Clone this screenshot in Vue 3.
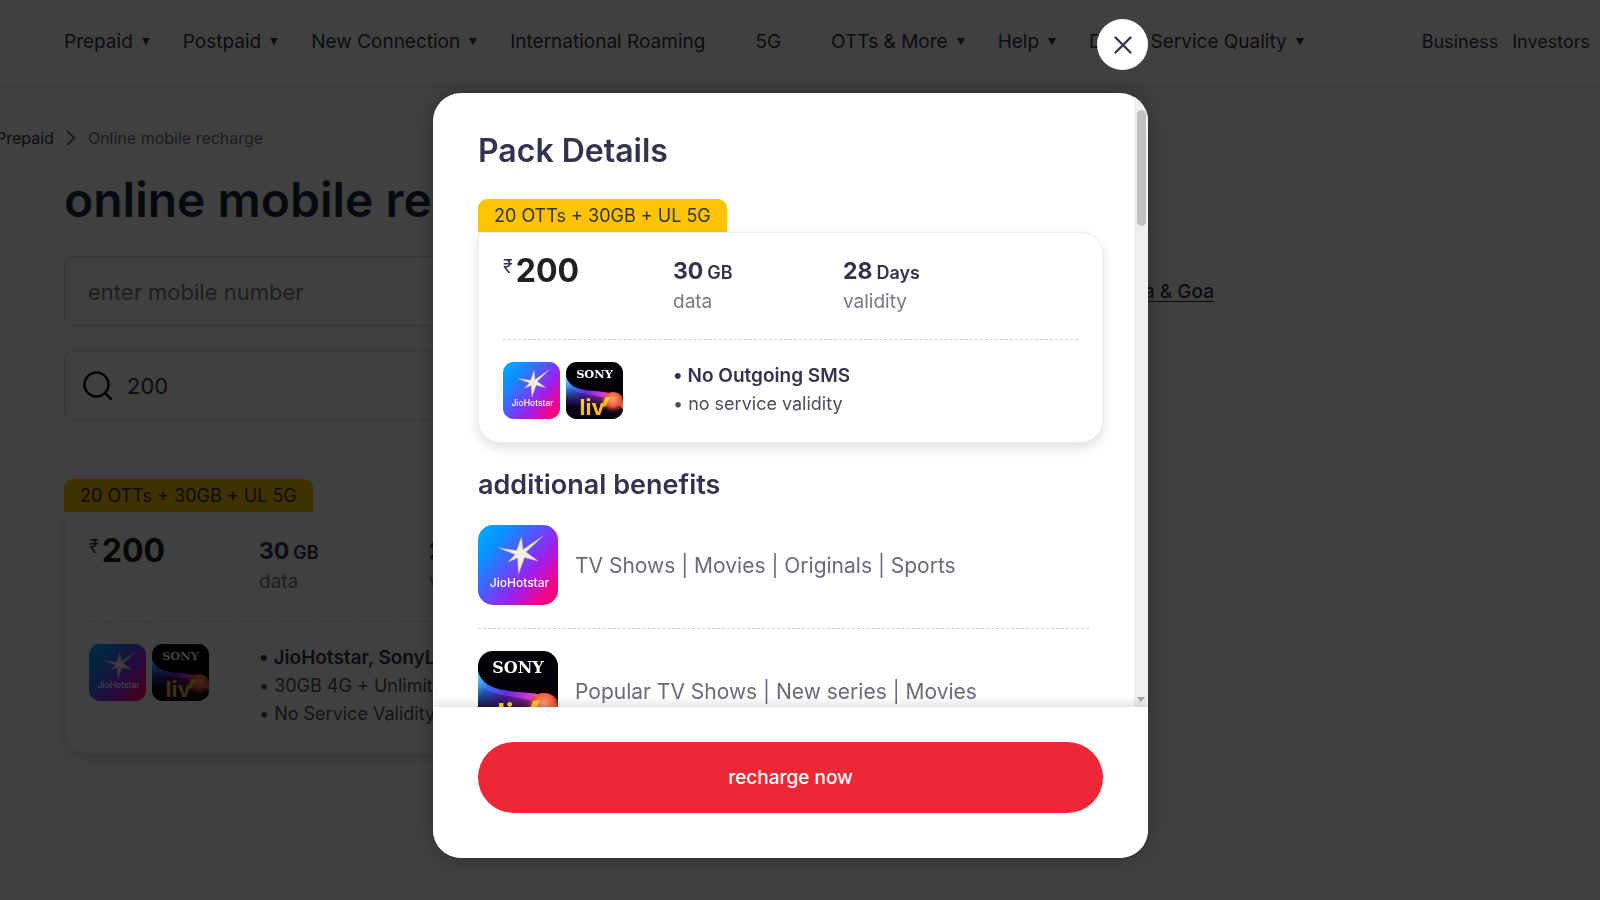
<script setup>
import { ref } from "vue";

const mobile = ref("");
const search = ref("200");
const isOpen = ref(true);

const navItems = [
    { label: "Prepaid", menu: true },
    { label: "Postpaid", menu: true },
    { label: "New Connection", menu: true },
    { label: "International Roaming", menu: false },
    { label: "5G", menu: false },
    { label: "OTTs & More", menu: true },
    { label: "Help", menu: true },
    { label: "Digital Service Quality", menu: true },
];

const pack = {
    tag: "20 OTTs + 30GB + UL 5G",
    price: "200",
    specs: [
        { value: "30", unit: "GB", label: "data" },
        { value: "28", unit: "Days", label: "validity" },
    ],
    apps: ["hotstar", "sonyliv"],
};

const listPoints = ["JioHotstar, SonyLIV + 18 OTTs", "30GB 4G + Unlimited 5G", "No Service Validity"];
const modalPoints = ["No Outgoing SMS", "no service validity"];

const benefits = [
    { app: "hotstar", text: "TV Shows | Movies | Originals | Sports" },
    { app: "sonyliv", text: "Popular TV Shows | New series | Movies" },
];
</script>

<template>
    <div class="page">
        <!-- app logos, reused by both cards and the benefits list -->
        <svg class="sprite" width="0" height="0" aria-hidden="true">
            <defs>
                <linearGradient id="hs-bg" x1="0" y1="0.1" x2="1" y2="0.9">
                    <stop offset="0" stop-color="#00a8ff" />
                    <stop offset="0.2" stop-color="#0c90ff" />
                    <stop offset="0.45" stop-color="#5b50ff" />
                    <stop offset="0.66" stop-color="#a31de8" />
                    <stop offset="0.84" stop-color="#e4089c" />
                    <stop offset="1" stop-color="#ff0064" />
                </linearGradient>
                <linearGradient id="sl-band" x1="0" y1="0.1" x2="1" y2="0.5">
                    <stop offset="0" stop-color="#4cc4ff" />
                    <stop offset="0.16" stop-color="#2f74f5" />
                    <stop offset="0.4" stop-color="#6a2be0" />
                    <stop offset="0.64" stop-color="#c936d8" />
                    <stop offset="0.84" stop-color="#ff7a70" />
                    <stop offset="1" stop-color="#ffa04a" />
                </linearGradient>
                <linearGradient id="sl-fade" x1="0.55" y1="0" x2="0.45" y2="1">
                    <stop offset="0.1" stop-color="#0a0214" stop-opacity="0" />
                    <stop offset="0.7" stop-color="#0a0214" />
                </linearGradient>
                <radialGradient id="sl-ball" cx="0.5" cy="0.3" r="0.6">
                    <stop offset="0" stop-color="#ffa070" />
                    <stop offset="0.5" stop-color="#f0583c" />
                    <stop offset="1" stop-color="#5a1020" stop-opacity="0" />
                </radialGradient>
                <linearGradient id="sl-gold" x1="0" y1="0" x2="0" y2="1">
                    <stop offset="0" stop-color="#ffd83a" />
                    <stop offset="1" stop-color="#ffa800" />
                </linearGradient>
                <clipPath id="app-clip"><rect width="80" height="80" rx="15" /></clipPath>
            </defs>
            <symbol id="hotstar" viewBox="0 0 80 80">
                <rect width="80" height="80" rx="15" fill="url(#hs-bg)" />
                <path
                    d="M65 11 L48 27 L60 36 L46.500 32.500 L40.500 49 L39.500 33 L30 37 L37 29.500 L21 23 L38.500 25.500 L43.500 12 L45 24.500 Z"
                    fill="#f3eeea"
                    stroke="#c9a98c"
                    stroke-width="0.600"
                />
                <text x="41.500" y="62" text-anchor="middle" class="hotstar-name">JioHotstar</text>
            </symbol>
            <symbol id="sonyliv" viewBox="0 0 80 80">
                <g clip-path="url(#app-clip)">
                    <rect width="80" height="80" fill="#030106" />
                    <path d="M0 20 C6 42 34 39 52 42 C66 43 78 48 80 56 V80 H0 Z" fill="url(#sl-band)" />
                    <path d="M0 30 C10 46 34 44 54 50 C66 54 76 60 80 66 V80 H0 Z" fill="url(#sl-fade)" />
                    <circle cx="66" cy="59" r="17" fill="url(#sl-ball)" />
                    <text x="40" y="22" text-anchor="middle" class="sony-name">SONY</text>
                    <text x="19" y="75" class="liv-name" fill="url(#sl-gold)">liv</text>
                    <path d="M50 63 L55 50 L62 49 L56 62 Z" fill="url(#sl-gold)" />
                </g>
            </symbol>
        </svg>

        <header class="header">
            <nav class="main-nav" aria-label="Main">
                <a v-for="item in navItems" :key="item.label" href="#" class="nav-link">
                    {{ item.label }}
                    <span class="caret" :class="{ blank: !item.menu }"></span>
                </a>
            </nav>
            <nav class="side-nav" aria-label="Company">
                <a href="#" class="nav-link">Business</a>
                <a href="#" class="nav-link">Investors</a>
            </nav>
        </header>

        <nav class="breadcrumb" aria-label="Breadcrumb">
            <a href="#">Prepaid</a>
            <svg width="10" height="16" viewBox="0 0 10 16" fill="none" stroke="currentColor" stroke-width="2">
                <path d="M1 1 L8.500 8 L1 15" />
            </svg>
            <span>Online mobile recharge</span>
        </nav>

        <main class="content">
            <h1>online mobile recharge</h1>

            <div class="field-row">
                <label class="field">
                    <input v-model="mobile" type="tel" placeholder="enter mobile number" aria-label="mobile number" />
                </label>
                <a href="#" class="circle-link">Maharashtra &amp; Goa</a>
            </div>

            <label class="field search">
                <svg width="30" height="30" viewBox="0 0 30 30" fill="none" stroke="#0c0c14" stroke-width="2.500" stroke-linecap="round">
                    <circle cx="13.500" cy="13.500" r="12" />
                    <path d="M22.500 22.500 L28 28" />
                </svg>
                <input v-model="search" type="text" aria-label="search packs" />
            </label>

            <section class="pack pack-listed">
                <span class="tag">{{ pack.tag }}</span>
                <div class="card">
                    <div class="card-row">
                        <div class="price"><span class="rupee">₹</span>{{ pack.price }}</div>
                        <div v-for="s in pack.specs" :key="s.label" class="spec">
                            <strong>{{ s.value }}<small>{{ s.unit }}</small></strong>
                            <span>{{ s.label }}</span>
                        </div>
                    </div>
                    <div class="card-row apps-row">
                        <div class="apps">
                            <svg v-for="app in pack.apps" :key="app"><use :href="'#' + app" /></svg>
                        </div>
                        <ul class="points">
                            <li v-for="p in listPoints" :key="p">{{ p }}</li>
                        </ul>
                    </div>
                </div>
            </section>
        </main>

        <div v-if="isOpen" class="overlay">
            <div class="dialog-wrap">
                <button type="button" class="close" aria-label="Close" @click="isOpen = false">
                    <svg width="18" height="18" viewBox="0 0 18 18" fill="none" stroke="#33334d" stroke-width="2.300" stroke-linecap="round">
                        <path d="M1.500 1.500 L16.500 16.500 M16.500 1.500 L1.500 16.500" />
                    </svg>
                </button>

                <div class="dialog" role="dialog" aria-modal="true" aria-labelledby="dialog-title">
                    <div class="dialog-body">
                        <div class="scroll">
                            <h2 id="dialog-title">Pack Details</h2>

                            <section class="pack">
                                <span class="tag">{{ pack.tag }}</span>
                                <div class="card">
                                    <div class="card-row">
                                        <div class="price"><span class="rupee">₹</span>{{ pack.price }}</div>
                                        <div v-for="s in pack.specs" :key="s.label" class="spec">
                                            <strong>{{ s.value }}<small>{{ s.unit }}</small></strong>
                                            <span>{{ s.label }}</span>
                                        </div>
                                    </div>
                                    <div class="card-row apps-row">
                                        <div class="apps">
                                            <svg v-for="app in pack.apps" :key="app"><use :href="'#' + app" /></svg>
                                        </div>
                                        <ul class="points">
                                            <li v-for="p in modalPoints" :key="p">{{ p }}</li>
                                        </ul>
                                    </div>
                                </div>
                            </section>

                            <h3>additional benefits</h3>
                            <ul class="benefits">
                                <li v-for="b in benefits" :key="b.app">
                                    <svg><use :href="'#' + b.app" /></svg>
                                    <span>{{ b.text }}</span>
                                </li>
                            </ul>
                        </div>
                        <div class="scrollbar" aria-hidden="true">
                            <span class="thumb"></span>
                            <span class="arrow"></span>
                        </div>
                    </div>
                    <footer class="dialog-footer">
                        <button type="button" class="recharge">recharge now</button>
                    </footer>
                </div>
            </div>
        </div>
    </div>
</template>

<style>
html,
body {
    margin: 0;
    overflow: hidden;
}
</style>

<style scoped>
* {
    box-sizing: border-box;
}

.page {
    min-height: 100vh;
    overflow: hidden;
    background: #ffffff;
    color: #33334d;
    font-family: Inter, "Liberation Sans", sans-serif;
    font-size: 19px;
}

.sprite {
    position: absolute;
}

.hotstar-name {
    font: 500 12px Inter, sans-serif;
    fill: #ffffff;
}

.sony-name {
    font: bold 16px "DejaVu Serif", serif;
    fill: #ffffff;
}

.liv-name {
    font: 700 31px Inter, sans-serif;
}

h1,
h2,
h3,
ul {
    margin: 0;
    padding: 0;
}

ul {
    list-style: none;
}

a {
    color: inherit;
    text-decoration: none;
}

button,
input {
    font: inherit;
    border: none;
}

/* header */
.header {
    display: flex;
    justify-content: space-between;
    align-items: center;
    height: 87px;
    padding: 0 10px 3px 64px;
    border-bottom: 1px solid #e4e4e8;
    white-space: nowrap;
}

.main-nav {
    display: flex;
    gap: 33px;
}

.side-nav {
    display: flex;
    gap: 14px;
    font-size: 18px;
}

.nav-link {
    display: flex;
    align-items: center;
    gap: 9px;
}

.caret {
    border: 4px solid transparent;
    border-top: 7px solid #33334d;
    border-bottom: 0;
}

.caret.blank {
    visibility: hidden;
}

.breadcrumb {
    display: flex;
    align-items: center;
    gap: 12px;
    margin: 39px 0 0 -4px;
    font-size: 16px;
    line-height: 24px;
    color: #6e6e80;
}

.breadcrumb a {
    color: #33334d;
}

/* page content */
.content {
    width: 1150px;
    margin-left: 64px;
}

h1 {
    margin: 20px 0 26px;
    font-size: 48px;
    line-height: 60px;
    font-weight: 600;
    color: #1c2740;
}

.field-row {
    display: flex;
    align-items: center;
    gap: 24px;
    margin-bottom: 24px;
}

.field {
    display: flex;
    align-items: center;
    flex: 1;
    height: 70px;
    padding: 2px 23px 0;
    border: 1px solid #d5d5dc;
    border-radius: 10px;
}

.field input {
    flex: 1;
    padding: 0;
    outline: none;
    background: none;
    color: #33334d;
    font-size: 22px;
}

.field input::placeholder {
    color: #77778a;
    opacity: 1;
}

.search {
    gap: 14px;
    width: 900px;
    padding: 2px 18px 0;
}

.circle-link {
    font-weight: 500;
    text-decoration: underline;
    text-underline-offset: 3px;
}

/* pack card */
.tag {
    display: block;
    width: fit-content;
    height: 33px;
    padding: 0 16px;
    border-radius: 9px 9px 0 0;
    background: #ffc400;
    font-size: 18px;
    line-height: 34px;
    color: #333333;
}

.card {
    padding: 0 24px;
    border: 1px solid #ececef;
    border-radius: 0 22px 22px 22px;
    background: #ffffff;
    box-shadow: 0 5px 12px rgba(0, 0, 0, 0.12);
}

.card-row {
    display: grid;
    grid-template-columns: 170px 170px 1fr;
    padding: 24px 0 23px;
}

.apps-row {
    grid-template-columns: 170px 1fr;
    border-top: 1px dashed #cfcfd6;
    padding-top: 22px;
}

.price {
    display: flex;
    align-items: flex-start;
    gap: 3px;
    font-size: 32px;
    line-height: 28px;
    font-weight: 700;
    color: #212121;
}

.rupee {
    font-size: 18px;
    line-height: 20px;
    font-weight: 400;
    color: #33334d;
}

.spec {
    display: flex;
    flex-direction: column;
    line-height: 29px;
    color: #77778a;
}

.spec strong {
    font-size: 23px;
    font-weight: 700;
    color: #33334d;
}

.spec small {
    margin-left: 4px;
    font-size: 18px;
    font-weight: 600;
}

.apps {
    display: flex;
    gap: 6px;
}

.apps svg {
    width: 57px;
    height: 57px;
}

.points li {
    font-size: 18px;
    line-height: 28px;
    color: #4c4c5c;
}

.points li::before {
    content: "•";
    margin-right: 5px;
}

.points li:first-child {
    font-size: 19px;
    font-weight: 600;
    color: #33334d;
}

.pack-listed {
    width: 624px;
    margin-top: 59px;
}

.pack-listed .card-row {
    padding-bottom: 25px;
}

/* dialog */
.overlay {
    position: fixed;
    inset: 0;
    display: flex;
    justify-content: center;
    padding: 19px 19px 0 0;
    background: rgba(0, 0, 0, 0.75);
}

.dialog-wrap {
    display: flex;
    flex-direction: column;
    gap: 23px;
    width: 715px;
    max-width: 100%;
}

.close {
    display: flex;
    align-items: center;
    justify-content: center;
    align-self: flex-end;
    flex: none;
    width: 51px;
    height: 51px;
    padding: 0;
    border-radius: 50%;
    background: #ffffff;
    cursor: pointer;
}

.dialog {
    display: flex;
    flex-direction: column;
    height: 85vh;
    overflow: hidden;
    border-radius: 28px;
    background: #ffffff;
    box-shadow: 0 0 24px rgba(0, 0, 0, 0.3);
}

.dialog-body {
    display: flex;
    flex: 1;
    min-height: 0;
}

.scroll {
    flex: 1;
    overflow: hidden;
    padding: 38px 31px 0 45px;
}

h2 {
    margin-bottom: 28px;
    font-size: 32px;
    line-height: 40px;
    font-weight: 600;
}

h3 {
    margin: 24px 0 22px;
    font-size: 27px;
    line-height: 36px;
    font-weight: 600;
}

.benefits {
    padding-right: 14px;
}

.benefits li {
    display: flex;
    align-items: center;
    gap: 17px;
    padding-bottom: 23px;
    border-bottom: 1px dashed #cfcfd6;
    margin-bottom: 22px;
    font-size: 21px;
    color: #6a6a7a;
}

.benefits svg {
    flex: none;
    width: 80px;
    height: 80px;
}

.scrollbar {
    display: flex;
    flex-direction: column;
    justify-content: space-between;
    align-items: center;
    width: 14px;
    padding: 17px 0 5px;
    background: #f0f0f0;
}

.thumb {
    width: 9px;
    height: 116px;
    border-radius: 5px;
    background: #c1c1c1;
}

.arrow {
    border: 4px solid transparent;
    border-top: 5px solid #a8a8a8;
    border-bottom: 0;
}

.dialog-footer {
    position: relative;
    padding: 35px 45px 45px;
    background: #ffffff;
    box-shadow: 0 -2px 10px rgba(0, 0, 0, 0.16);
}

.recharge {
    width: 100%;
    height: 71px;
    border-radius: 36px;
    background: #ee2737;
    color: #ffffff;
    font-weight: 500;
    cursor: pointer;
}
</style>
